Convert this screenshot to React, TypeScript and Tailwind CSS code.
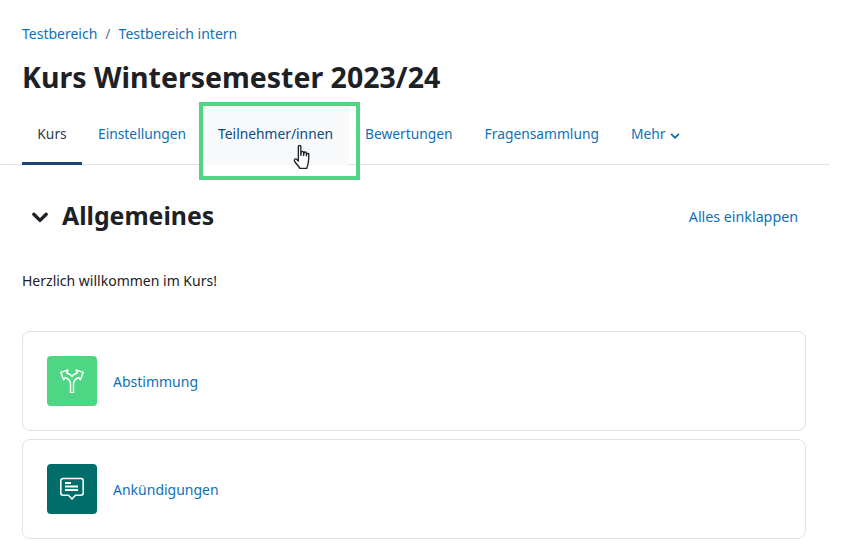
const font = "[font-family:'Noto_Sans',sans-serif]";
const link = "text-[#0f70b7]";

const tabs = [
  { label: "Kurs", active: true },
  { label: "Einstellungen" },
  { label: "Teilnehmer/innen", hover: true },
  { label: "Bewertungen" },
  { label: "Fragensammlung" },
];

function Chevron({ className }: { className: string }) {
  return (
    <svg className={className} viewBox="0 0 16 16" fill="none" stroke="currentColor" strokeWidth={3} strokeLinecap="round" strokeLinejoin="round">
      <path d="M2.5 5.5 8 11l5.5-5.5" />
    </svg>
  );
}

function Hand() {
  return (
    <svg className="absolute left-[292px] top-[144px] w-[21px] h-[28px]" viewBox="0 0 20 27" fill="#fff" stroke="#1d2125" strokeWidth={1.3} strokeLinejoin="round" strokeLinecap="round">
      <path d="M6 2.5c0-1.5 2.4-1.5 2.4 0V11l.3-3c.2-1.3 2.2-1.2 2.3.1l.1 3 .4-2.6c.3-1.2 2.1-1 2.2.2l.1 2.6.4-1.7c.4-1 1.900-.7 1.900.4 0 3-.1 6-.6 8.500-.4 2-1 3.500-1.400 5H7.500C6.500 21.500 4 19.500 2.300 16.500c-.8-1.500.8-2.800 2-1.700L6 16.500Z" />
    </svg>
  );
}

function ChoiceIcon() {
  return (
    <svg className="w-6 h-6" viewBox="0 0 24 24" fill="none" stroke="#fff" strokeWidth={1.4} strokeLinejoin="round">
      <path d="M10.500 23.500V15C10.500 11.500 8.500 9.800 5.300 8.500L3.600 10.800 .8 3.400 8 1 6.700 4C9.500 5 11.300 6 12 7.500 12.700 6 14.500 5 17.300 4L16 1 23.200 3.400 20.400 10.800 18.700 8.500C15.500 9.800 13.500 11.500 13.500 15V23.500Z" />
    </svg>
  );
}

function ForumIcon() {
  return (
    <svg className="w-6 h-6" viewBox="0 0 24 24" fill="none" stroke="#fff" strokeWidth={1.6} strokeLinejoin="round" strokeLinecap="round">
      <path d="M3 1.500H21A2.200 2.200 0 0 1 23.200 3.700V16A2.200 2.200 0 0 1 21 18.200H15.500L12 22 8.500 18.200H3A2.200 2.200 0 0 1 .8 16V3.700A2.200 2.200 0 0 1 3 1.500Z" />
      <path d="M5 6H11M5 9.500H18M5 13H18" strokeWidth={1.8} strokeLinecap="butt" />
    </svg>
  );
}

function ActivityCard({ name, color, children }: { name: string; color: string; children: React.ReactNode }) {
  return (
    <div className="flex items-center h-[100px] w-[784px] border border-[#dee2e6] rounded-lg pl-6">
      <div className={`w-[50px] h-[50px] rounded flex items-center justify-center ${color}`}>{children}</div>
      <a className={`ml-4 text-[14px] ${link}`}>{name}</a>
    </div>
  );
}

export default function App() {
  return (
    <div className={`${font} relative w-[865px] h-[544px] overflow-hidden bg-white text-[#1d2125] text-[14px]`}>
      <div className="w-[830px]">
        <nav className={`flex items-center gap-2 pl-[22px] pt-[22px] h-[44px] ${link}`}>
          <a>Testbereich</a>
          <span className="text-[#6a737b]">/</span>
          <a>Testbereich intern</a>
        </nav>
        <h1 className="pl-[22px] mt-[14px] text-[28.5px] leading-[38px] font-bold">Kurs Wintersemester 2023/24</h1>
        <div className="flex mt-[8px] px-[22px] h-[61px] border-b border-[#dee2e6] text-[13.8px]">
          {tabs.map((t) => (
            <a
              key={t.label}
              className={`flex shrink-0 items-center h-[61px] ${t.active ? "w-[60px] justify-center border-b-[3px] border-[#1d4373] text-[#2a3b4d] pt-[3px]" : "px-4"} ${t.hover ? "bg-[#f8f9fa] text-[#0c4a80]" : ""} ${!t.active && !t.hover ? link : ""}`}
            >
              {t.label}
            </a>
          ))}
          <a className={`flex items-center gap-1 px-4 h-[61px] ${link}`}>
            Mehr
            <Chevron className="w-[10px] h-[10px] mt-[2px]" />
          </a>
        </div>
      </div>

      <div className="w-[806px] pl-[22px]">
        <div className="flex items-center justify-between mt-[31px] h-[40px] pr-[8px]">
          <div className="flex items-center">
            <Chevron className="w-[18px] h-[18px] ml-[9px] mt-[1px]" />
            <h2 className="ml-[13px] text-[24.8px] font-bold">Allgemeines</h2>
          </div>
          <a className={`text-[14.25px] mt-[1px] ${link}`}>Alles einklappen</a>
        </div>
        <p className="mt-[35px] leading-[20px]">Herzlich willkommen im Kurs!</p>
        <div className="flex flex-col gap-2 mt-[40px]">
          <ActivityCard name="Abstimmung" color="bg-[#4ed684]"><ChoiceIcon /></ActivityCard>
          <ActivityCard name="Ankündigungen" color="bg-[#016d6a]"><ForumIcon /></ActivityCard>
        </div>
      </div>

      <div className="absolute left-[199px] top-[102px] w-[161px] h-[78px] border-4 border-[#4ed684]" />
      <Hand />
    </div>
  );
}
